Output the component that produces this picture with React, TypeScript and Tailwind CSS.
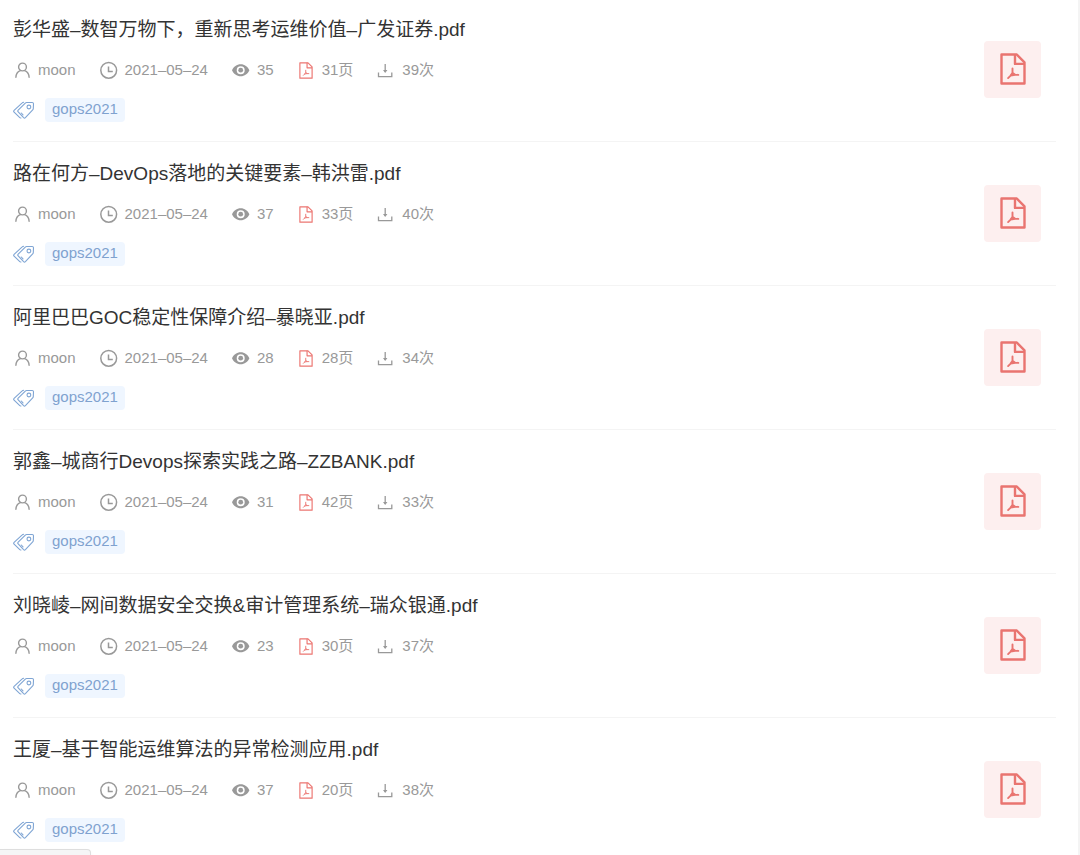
type Doc = {
  title: string;
  views: number;
  pages: number;
  downloads: number;
};

const docs: Doc[] = [
  { title: "彭华盛–数智万物下，重新思考运维价值–广发证券.pdf", views: 35, pages: 31, downloads: 39 },
  { title: "路在何方–DevOps落地的关键要素–韩洪雷.pdf", views: 37, pages: 33, downloads: 40 },
  { title: "阿里巴巴GOC稳定性保障介绍–暴晓亚.pdf", views: 28, pages: 28, downloads: 34 },
  { title: "郭鑫–城商行Devops探索实践之路–ZZBANK.pdf", views: 31, pages: 42, downloads: 33 },
  { title: "刘晓崚–网间数据安全交换&审计管理系统–瑞众银通.pdf", views: 23, pages: 30, downloads: 37 },
  { title: "王厦–基于智能运维算法的异常检测应用.pdf", views: 37, pages: 20, downloads: 38 },
];

function UserIcon() {
  return (
    <svg className="size-[18px]" viewBox="0 0 18 18" fill="none" stroke="currentColor" strokeWidth="1.400" strokeLinecap="round" aria-hidden="true">
      <circle cx="9.500" cy="6" r="3.900" />
      <path d="M2.900 16.200c.2-3.400 1.900-5.700 4.500-6.600M16.100 16.200c-.2-3.400-1.900-5.700-4.500-6.600" />
    </svg>
  );
}

function ClockIcon() {
  return (
    <svg className="size-[18px]" viewBox="0 0 18 18" fill="none" stroke="currentColor" strokeWidth="1.500" aria-hidden="true">
      <circle cx="8.700" cy="9.300" r="7.900" />
      <path d="M8.500 5.500v4.900h4.300" />
    </svg>
  );
}

function EyeIcon() {
  return (
    <svg className="size-[18px]" viewBox="0 0 18 18" fill="currentColor" aria-hidden="true">
      <path
        fillRule="evenodd"
        d="M8.700 3.200C4.900 3.200 1.500 5.600 0 9.200c1.500 3.600 4.900 6 8.700 6s7.200-2.400 8.700-6c-1.500-3.600-4.900-6-8.700-6Zm0 10a4 4 0 1 1 0-8 4 4 0 0 1 0 8Z"
      />
      <circle cx="8.700" cy="9.200" r="2.400" />
    </svg>
  );
}

function PdfIcon({ className, strokeWidth }: { className: string; strokeWidth: number }) {
  return (
    <svg className={className} viewBox="0 0 26 32" fill="none" stroke="currentColor" strokeWidth={strokeWidth} strokeLinejoin="round" aria-hidden="true">
      <path d="M1.500 1.500h15.300l7.700 7.800v21.200h-23Z" />
      <path d="M15 1.500v9.400h9.300" />
      <path strokeLinecap="round" strokeWidth={strokeWidth * 0.8} d="M12.500 15.500v4.300l2.700 2 3.100.1M12.500 19.800l-1.900 2.800-2.500 2.500M10.600 22.600l4.600-.8" />
    </svg>
  );
}

function DownloadIcon() {
  return (
    <svg className="size-[18px]" viewBox="0 0 18 18" fill="none" stroke="currentColor" strokeWidth="1.300" aria-hidden="true">
      <path d="M1.500 11.500v4.100h13.300v-4.100M8.200 3v8" />
      <path d="M6 9h4.400l-2.200 3Z" fill="currentColor" stroke="none" />
    </svg>
  );
}

function TagsIcon() {
  return (
    <svg className="h-[18px] w-[22px] text-[#7fa5d4]" viewBox="0 0 22 18" fill="none" stroke="currentColor" strokeWidth="1.100" strokeLinecap="round" strokeLinejoin="round" aria-hidden="true">
      <path d="M13.600 1.500h5.600c.9 0 1.300.4 1.300 1.300l-.2 4.600c0 .6-.2 1-.6 1.400l-7.300 7.800c-.6.600-1.200.6-1.800 0l-5.400-5.700c-.6-.6-.6-1.200 0-1.800l7.100-7c.4-.4.800-.6 1.300-.6Z" />
      <circle cx="15.900" cy="6" r="1.900" />
      <path d="M10.600 1.300c-.6 0-1 .2-1.400.6L1.100 9.300c-.6.600-.6 1.200 0 1.800l5.700 5.600c.3.300.7.400 1.200.3M8.300 12l1.700 1.900" />
    </svg>
  );
}

function DocRow({ doc }: { doc: Doc }) {
  return (
    <li className="flex items-center justify-between border-b border-[#f4f4f4] pt-[18px] pb-[19px] first:pt-0 last:border-0 last:pb-0">
      <div className="min-w-0">
        <h2 className="text-[19px] leading-7 text-[#333]">
          <a href="#">{doc.title}</a>
        </h2>
        <div className="mt-[14px] flex h-6 items-center gap-6 text-[15px] leading-6 text-[#999]">
          <span className="flex items-center gap-[7px]">
            <UserIcon />
            moon
          </span>
          <span className="flex items-center gap-[7px]">
            <ClockIcon />
            <time dateTime="2021-05-24">2021–05–24</time>
          </span>
          <span className="flex items-center gap-[7px]">
            <EyeIcon />
            {doc.views}
          </span>
          <span className="flex items-center gap-[7px]">
            <span className="flex w-[17px] justify-center text-[#ec7672]">
              <PdfIcon className="h-[17px] w-[14px]" strokeWidth={2.2} />
            </span>
            {doc.pages}页
          </span>
          <span className="flex items-center gap-[7px]">
            <DownloadIcon />
            {doc.downloads}次
          </span>
        </div>
        <div className="mt-4 flex items-center gap-[10px]">
          <TagsIcon />
          <a href="#" className="rounded bg-[#eff6ff] px-[7px] pb-0.5 text-[15px] leading-[22px] text-[#7fa2cf]">
            gops2021
          </a>
        </div>
      </div>
      <a href="#" aria-label={doc.title} className="mr-[15px] flex size-[57px] shrink-0 items-center justify-center rounded bg-[#fdefef] text-[#e97470]">
        <PdfIcon className="h-8 w-[26px]" strokeWidth={2.4} />
      </a>
    </li>
  );
}

export default function App() {
  return (
    <main className="relative min-h-screen overflow-hidden border-r-2 border-[#f4f4f4] bg-white pt-4 pr-[22px] pl-[13px] font-['Liberation_Sans','Noto_Sans_CJK_SC',sans-serif]">
      <ul>
        {docs.map((doc) => (
          <DocRow key={doc.title} doc={doc} />
        ))}
      </ul>
      <div className="absolute bottom-0 left-0 h-[6px] w-[91px] rounded-tr border-t border-r border-[#dedede] bg-[#f5f5f6] shadow-md" />
    </main>
  );
}
